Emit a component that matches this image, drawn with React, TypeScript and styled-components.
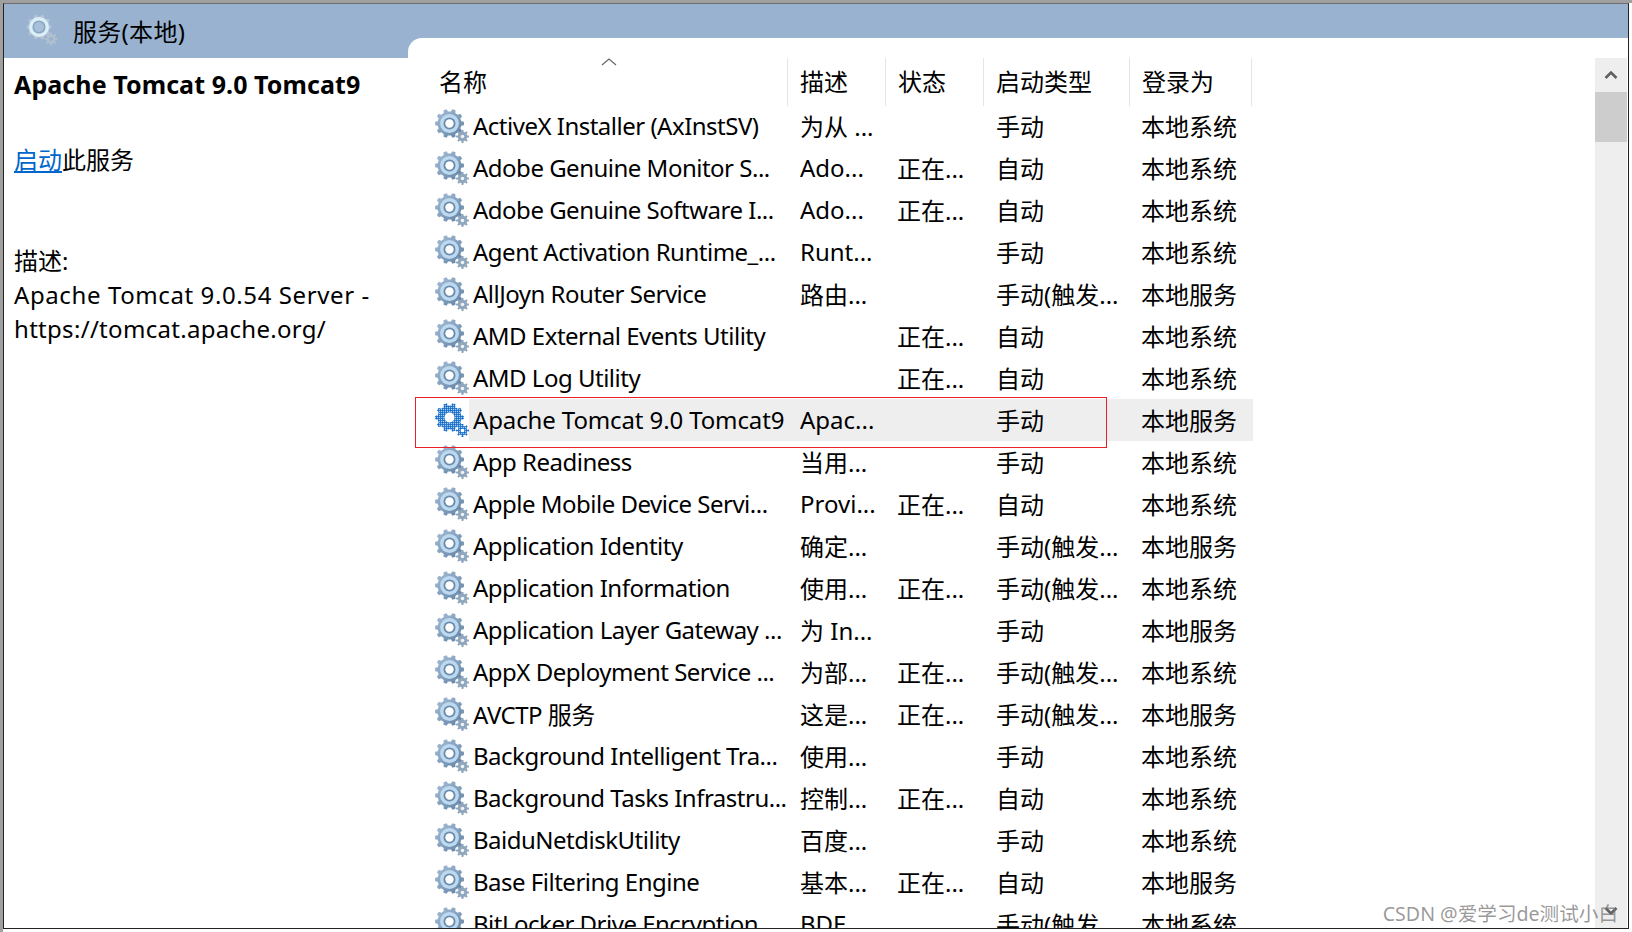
import React from "react";
import styled, { createGlobalStyle } from "styled-components";

type Service = {
    name: string;
    desc: string;
    status: string;
    startup: string;
    logon: string;
};

const services: Service[] = [
    { name: "ActiveX Installer (AxInstSV)", desc: "为从 ...", status: "", startup: "手动", logon: "本地系统" },
    { name: "Adobe Genuine Monitor S...", desc: "Ado...", status: "正在...", startup: "自动", logon: "本地系统" },
    { name: "Adobe Genuine Software I...", desc: "Ado...", status: "正在...", startup: "自动", logon: "本地系统" },
    { name: "Agent Activation Runtime_...", desc: "Runt...", status: "", startup: "手动", logon: "本地系统" },
    { name: "AllJoyn Router Service", desc: "路由...", status: "", startup: "手动(触发...", logon: "本地服务" },
    { name: "AMD External Events Utility", desc: "", status: "正在...", startup: "自动", logon: "本地系统" },
    { name: "AMD Log Utility", desc: "", status: "正在...", startup: "自动", logon: "本地系统" },
    { name: "Apache Tomcat 9.0 Tomcat9", desc: "Apac...", status: "", startup: "手动", logon: "本地服务" },
    { name: "App Readiness", desc: "当用...", status: "", startup: "手动", logon: "本地系统" },
    { name: "Apple Mobile Device Servi...", desc: "Provi...", status: "正在...", startup: "自动", logon: "本地系统" },
    { name: "Application Identity", desc: "确定...", status: "", startup: "手动(触发...", logon: "本地服务" },
    { name: "Application Information", desc: "使用...", status: "正在...", startup: "手动(触发...", logon: "本地系统" },
    { name: "Application Layer Gateway ...", desc: "为 In...", status: "", startup: "手动", logon: "本地服务" },
    { name: "AppX Deployment Service ...", desc: "为部...", status: "正在...", startup: "手动(触发...", logon: "本地系统" },
    { name: "AVCTP 服务", desc: "这是...", status: "正在...", startup: "手动(触发...", logon: "本地服务" },
    { name: "Background Intelligent Tra...", desc: "使用...", status: "", startup: "手动", logon: "本地系统" },
    { name: "Background Tasks Infrastru...", desc: "控制...", status: "正在...", startup: "自动", logon: "本地系统" },
    { name: "BaiduNetdiskUtility", desc: "百度...", status: "", startup: "手动", logon: "本地系统" },
    { name: "Base Filtering Engine", desc: "基本...", status: "正在...", startup: "自动", logon: "本地服务" },
    { name: "BitLocker Drive Encryption ...", desc: "BDE...", status: "", startup: "手动(触发...", logon: "本地系统" },
];

const gearPath = (cx: number, cy: number, outer: number, inner: number, teeth: number) => {
    const step = (Math.PI * 2) / teeth;
    const points: string[] = [];
    for (let i = 0; i < teeth; i++) {
        const a = i * step;
        const pairs: [number, number][] = [
            [a - step * 0.3, inner],
            [a - step * 0.18, outer],
            [a + step * 0.18, outer],
            [a + step * 0.3, inner],
        ];
        pairs.forEach(([t, r]) => {
            points.push(`${(cx + Math.cos(t) * r).toFixed(2)} ${(cy + Math.sin(t) * r).toFixed(2)}`);
        });
    }
    return `M${points.join("L")}Z`;
};

const BIG_GEAR = gearPath(14.5, 14.5, 14.5, 12, 10);
const SMALL_GEAR = gearPath(27.5, 27.5, 6.5, 4.8, 8);

const GearIcon = ({ active }: { active?: boolean }) => (
    <GearSvg viewBox="0 0 34 34">
        <defs>
            <linearGradient id="gear-steel" x1="0" y1="0" x2="1" y2="1">
                <stop offset="0" stopColor="#a9bfd6" />
                <stop offset="0.55" stopColor="#7f9dbd" />
                <stop offset="1" stopColor="#5f7f9f" />
            </linearGradient>
            <pattern id="gear-dither" width="2" height="2" patternUnits="userSpaceOnUse">
                <rect width="2" height="2" fill="#2f80d2" />
                <rect width="1" height="1" fill="#a5cdf2" />
                <rect x="1" y="1" width="1" height="1" fill="#1c6cc0" />
            </pattern>
        </defs>
        {active ? (
            <>
                <path d={BIG_GEAR} fill="url(#gear-dither)" />
                <path d={SMALL_GEAR} fill="url(#gear-dither)" />
                <circle cx="27.5" cy="27.5" r="1.8" fill="#fff" />
                <circle cx="14.5" cy="14.5" r="5" fill="#fff" />
            </>
        ) : (
            <>
                <path d={BIG_GEAR} fill="url(#gear-steel)" />
                <circle cx="14.5" cy="14.5" r="9.4" fill="#bcd9f0" />
                <circle cx="14.5" cy="14.5" r="6" fill="#6a8bab" />
                <circle cx="14.5" cy="14.5" r="4.2" fill="#fff" />
                <path d={SMALL_GEAR} fill="#8fa6bd" />
                <circle cx="27.5" cy="27.5" r="1.8" fill="#eef3f7" />
            </>
        )}
    </GearSvg>
);

const TabIcon = () => (
    <TabSvg viewBox="0 0 32 32">
        <path d={gearPath(13, 13, 12.5, 10.5, 10)} fill="#b4c4d6" />
        <circle cx="13" cy="13" r="10" fill="#dbeff7" />
        <circle cx="13" cy="13" r="6.6" fill="#8aa6c2" />
        <circle cx="13" cy="13" r="5" fill="#a8bfd8" />
        <path d={gearPath(25, 25, 6.5, 4.8, 8)} fill="#b0bfce" />
        <circle cx="25" cy="25" r="2" fill="#98b2d0" />
    </TabSvg>
);

const ChevronUp = () => (
    <ChevronSvg viewBox="0 0 14 10">
        <path d="M1.5 8 L7 2.5 L12.5 8" />
    </ChevronSvg>
);

const ChevronDown = () => (
    <ChevronSvg viewBox="0 0 14 10">
        <path d="M1.5 2 L7 7.5 L12.5 2" />
    </ChevronSvg>
);

const App = () => (
    <Frame>
        <GlobalStyle />
        <Inner>
            <LeftPane>
                <Tab>
                    <TabIcon />
                    <TabTitle>服务(本地)</TabTitle>
                </Tab>
                <Detail>
                    <DetailTitle>Apache Tomcat 9.0 Tomcat9</DetailTitle>
                    <ActionLine>
                        <StartLink>启动</StartLink>此服务
                    </ActionLine>
                    <DescLabel>描述:</DescLabel>
                    <DescLine $spacing={0.6}>Apache Tomcat 9.0.54 Server -</DescLine>
                    <DescLine $spacing={0.3}>https://tomcat.apache.org/</DescLine>
                </Detail>
            </LeftPane>
            <RightPane>
                <ListPanel>
                    <Table>
                        <HeaderRow>
                            <SortMark viewBox="0 0 16 8">
                                <path d="M1 7 L8 1 L15 7" />
                            </SortMark>
                            <NameHeader>名称</NameHeader>
                            <HeaderCell $width={98}>描述</HeaderCell>
                            <HeaderCell $width={98}>状态</HeaderCell>
                            <HeaderCell $width={146}>启动类型</HeaderCell>
                            <HeaderCell $width={122}>登录为</HeaderCell>
                        </HeaderRow>
                        {services.map((service) => {
                            const active = service.name.startsWith("Apache");
                            return (
                                <Row key={service.name}>
                                    <IconCell>
                                        <GearIcon active={active} />
                                    </IconCell>
                                    <RowBody $active={active}>
                                        <NameCell $active={active}>{service.name}</NameCell>
                                        <Cell>{service.desc}</Cell>
                                        <Cell>{service.status}</Cell>
                                        <Cell>{service.startup}</Cell>
                                        <Cell>{service.logon}</Cell>
                                    </RowBody>
                                </Row>
                            );
                        })}
                    </Table>
                    <Scrollbar>
                        <ScrollButton>
                            <ChevronUp />
                        </ScrollButton>
                        <ScrollThumb />
                        <ScrollTrack />
                        <ScrollButton>
                            <ChevronDown />
                        </ScrollButton>
                    </Scrollbar>
                    <Highlight />
                    <Watermark>CSDN @爱学习de测试小白</Watermark>
                </ListPanel>
            </RightPane>
        </Inner>
    </Frame>
);

const GlobalStyle = createGlobalStyle`
    html, body {
        margin: 0;
        padding: 0;
        background: #fff;
    }
    * {
        box-sizing: border-box;
    }
`;

const Frame = styled.div`
    width: 1632px;
    height: 932px;
    padding: 3px 3px 3px 3px;
    background: linear-gradient(#a0a0a0 3px, transparent 3px),
        linear-gradient(90deg, #a0a0a0 3px, #fff 3px);
    font-family: "Noto Sans", "Noto Sans CJK SC", sans-serif;
    color: #000;
    overflow: hidden;
`;

const Inner = styled.div`
    display: flex;
    height: 100%;
    border: 1px solid #222;
    border-top-color: #6e6e6e;
    background: #fff;
    overflow: hidden;
`;

const LeftPane = styled.div`
    flex: 0 0 404px;
    display: flex;
    flex-direction: column;
`;

const Tab = styled.div`
    display: flex;
    align-items: center;
    gap: 15px;
    height: 54px;
    padding: 0 0 2px 22px;
    background: #98b2d0;
`;

const TabSvg = styled.svg`
    width: 32px;
    height: 32px;
`;

const TabTitle = styled.span`
    font-size: 24px;
    letter-spacing: 0.3px;
`;

const Detail = styled.div`
    padding: 9px 0 0 10px;
`;

const DetailTitle = styled.div`
    font-size: 25px;
    font-weight: 700;
    line-height: 34px;
    letter-spacing: 0.08px;
`;

const ActionLine = styled.div`
    margin-top: 42px;
    font-size: 24px;
    line-height: 34px;
`;

const StartLink = styled.a`
    color: #0066cc;
    text-decoration: underline;
`;

const DescLabel = styled.div`
    margin-top: 67px;
    font-size: 24px;
    line-height: 34px;
`;

const DescLine = styled.div<{ $spacing: number }>`
    font-size: 24px;
    line-height: 33.5px;
    letter-spacing: ${({ $spacing }) => $spacing}px;
`;

const GearSvg = styled.svg`
    width: 34px;
    height: 34px;
`;

const RightPane = styled.div`
    flex: 1;
    display: flex;
    flex-direction: column;
    min-width: 0;
    padding-top: 34px;
    background: #98b2d0;
`;

const ListPanel = styled.div`
    position: relative;
    flex: 1;
    display: flex;
    justify-content: space-between;
    min-height: 0;
    padding-top: 20px;
    border-top-left-radius: 14px;
    background: #fff;
    overflow: hidden;
`;

const Table = styled.div`
    width: 837px;
    margin-left: 7px;
`;

const HeaderRow = styled.div`
    position: relative;
    display: flex;
    height: 47px;
    font-size: 24px;
    line-height: 47px;
`;

const SortMark = styled.svg`
    position: absolute;
    left: 186px;
    top: 0;
    width: 16px;
    height: 8px;
    fill: none;
    stroke: #666;
    stroke-width: 1.2;
`;

const NameHeader = styled.div`
    flex: 0 0 373px;
    height: 48px;
    padding-left: 24px;
    border-right: 1px solid #e5e5e5;
`;

const HeaderCell = styled.div<{ $width: number }>`
    flex: 0 0 ${({ $width }) => $width}px;
    height: 48px;
    padding-left: 12px;
    border-right: 1px solid #e5e5e5;
`;

const Row = styled.div`
    display: flex;
    height: 42px;
`;

const IconCell = styled.div`
    flex: 0 0 53px;
    display: flex;
    align-items: flex-start;
    padding: 4px 0 0 20px;
`;

const RowBody = styled.div<{ $active: boolean }>`
    flex: 1;
    display: grid;
    grid-template-columns: 321px 97px 99px 145px 122px;
    align-items: center;
    padding-bottom: 2px;
    background: ${({ $active }) => ($active ? "#eeeeee" : "transparent")};
    font-size: 24px;
    white-space: nowrap;
`;

const NameCell = styled.div<{ $active: boolean }>`
    padding-left: 4px;
    letter-spacing: ${({ $active }) => ($active ? "-0.12px" : "-0.5px")};
    overflow: hidden;
`;

const Cell = styled.div`
    padding-left: 10px;
    overflow: hidden;
`;

const Scrollbar = styled.div`
    flex: 0 0 32px;
    display: flex;
    flex-direction: column;
    margin-right: 1px;
    background: #eeeeee;
`;

const ScrollButton = styled.div`
    flex: 0 0 34px;
    display: flex;
    align-items: center;
    justify-content: center;
`;

const ChevronSvg = styled.svg`
    width: 14px;
    height: 10px;
    fill: none;
    stroke: #606060;
    stroke-width: 2.6;
`;

const ScrollThumb = styled.div`
    flex: 0 0 50px;
    background: #cdcdcd;
`;

const ScrollTrack = styled.div`
    flex: 1;
`;

const Highlight = styled.div`
    position: absolute;
    left: 7px;
    top: 359px;
    width: 692px;
    height: 51px;
    border: 1px solid #e8202a;
    pointer-events: none;
`;

const Watermark = styled.div`
    position: absolute;
    right: 10px;
    bottom: 1px;
    font-size: 19.6px;
    line-height: 26px;
    color: rgba(120, 120, 120, 0.75);
    white-space: nowrap;
`;

export default App;
